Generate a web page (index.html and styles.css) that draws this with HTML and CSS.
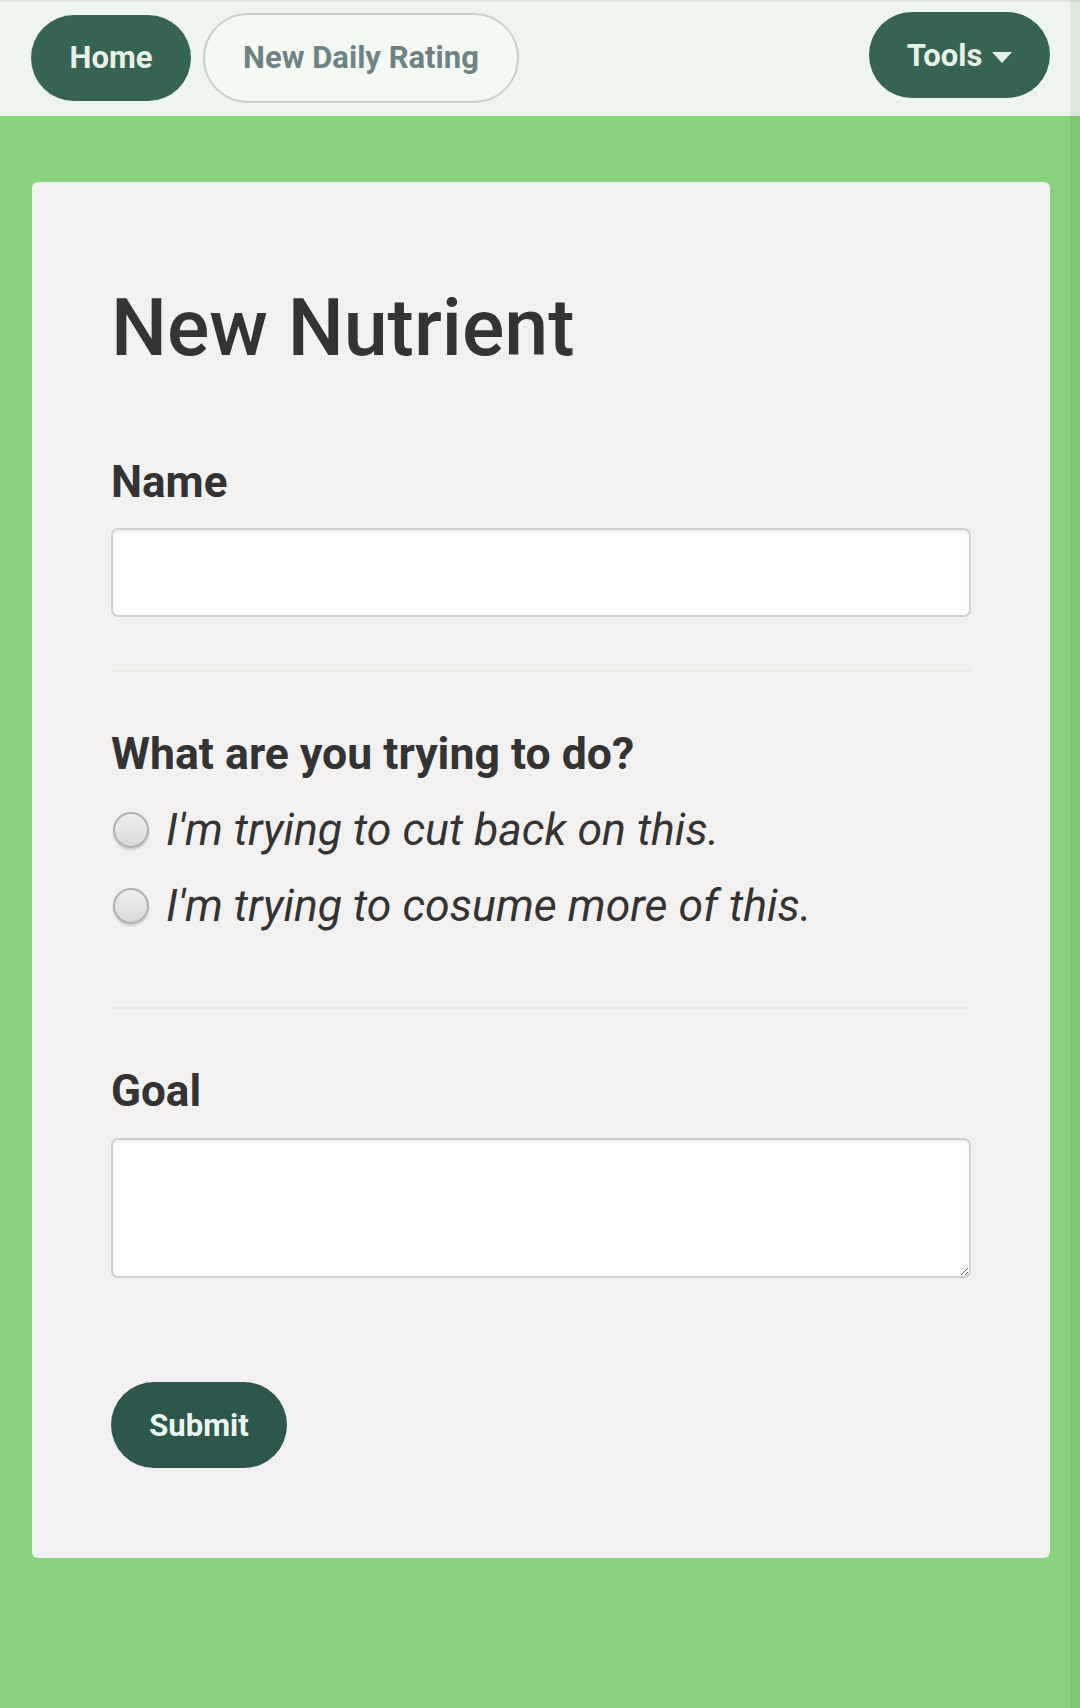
FILE: index.html
```html
<!DOCTYPE html>
<html lang="en">
<head>
<meta charset="utf-8">
<title>New Nutrient</title>
<link rel="stylesheet" href="styles.css">
</head>
<body>
<nav class="nav">
  <a class="pill pill-dark pill-home" href="#">Home</a>
  <a class="pill pill-light" href="#">New Daily Rating</a>
  <a class="pill pill-dark pill-tools" href="#">Tools <span class="caret"></span></a>
</nav>
<main class="card">
  <h1 class="title">New Nutrient</h1>
  <form class="form">
    <label class="label" for="name">Name</label>
    <input class="field" id="name" type="text">
    <hr class="sep sep-first">
    <div class="label label-q">What are you trying to do?</div>
    <label class="option"><input class="radio" type="radio" name="dir"><span>I'm trying to cut back on this.</span></label>
    <label class="option"><input class="radio" type="radio" name="dir"><span>I'm trying to cosume more of this.</span></label>
    <hr class="sep sep-second">
    <label class="label label-goal" for="goal">Goal</label>
    <textarea class="field area" id="goal"></textarea>
    <button class="submit" type="button">Submit</button>
  </form>
</main>
<div class="scrollbar"></div>
</body>
</html>
```

FILE: styles.css
```css
html {
  background: #88d47c;
}
body {
  margin: 0;
  min-height: 1708px;
  background: #88d47c;
  font-family: Roboto, "Liberation Sans", sans-serif;
  color: #333333;
}
.nav {
  display: flex;
  align-items: center;
  height: 116px;
  box-sizing: border-box;
  padding: 0 30px 0 31px;
  background: #edf5ec;
  border-top: 2px solid #dfe5df;
}
.pill {
  display: flex;
  align-items: center;
  justify-content: center;
  box-sizing: border-box;
  height: 86px;
  border-radius: 45px;
  font-size: 31px;
  font-weight: 700;
  text-decoration: none;
}
.pill-dark {
  background: #376352;
  color: #e8f1e8;
}
.pill-home {
  width: 160px;
  margin-bottom: 3px;
}
.pill-light {
  width: 316px;
  height: 90px;
  margin-left: 12px;
  margin-bottom: 3px;
  background: #f4faf3;
  border: 2px solid #c9d0c9;
  color: #6d8282;
}
.pill-tools {
  width: 181px;
  margin-left: auto;
  margin-bottom: 8px;
  gap: 10px;
}
.caret {
  width: 0;
  height: 0;
  border-left: 10px solid transparent;
  border-right: 10px solid transparent;
  border-top: 11px solid #e8f1e8;
  margin-top: 4px;
}
.card {
  display: block;
  margin: 66px 30px 0 32px;
  padding: 98px 79px 90px;
  background: #f2f1ef;
  border-radius: 6px;
}
.title {
  margin: 0;
  font-size: 79px;
  line-height: 96px;
  font-weight: 500;
  color: #333333;
}
.form {
  display: flex;
  flex-direction: column;
}
.label {
  display: block;
  margin-top: 80px;
  font-size: 44px;
  line-height: 52px;
  font-weight: 700;
  color: #333333;
}
.label-q {
  margin-top: 56px;
  font-size: 44.6px;
}
.label-goal {
  margin-top: 56px;
}
.field {
  display: block;
  margin: 20px 0 0;
  width: 100%;
  height: 89px;
  box-sizing: border-box;
  border: 2px solid #cfcfcf;
  border-radius: 7px;
  background: #ffffff;
  box-shadow: inset 0 2px 3px rgba(0, 0, 0, 0.07);
  font: inherit;
}
.area {
  margin-top: 21px;
  height: 140px;
  resize: vertical;
}
.sep {
  margin: 53px 0 0;
  border: 0;
  border-top: 2px solid #eae9e6;
  height: 0;
}
.sep-second {
  margin-top: 63px;
}
.option {
  display: flex;
  align-items: center;
  gap: 17px;
  height: 76px;
  font-size: 44.6px;
  font-style: italic;
  font-weight: 400;
  color: #333333;
}
.label-q + .option {
  margin-top: 12px;
}
.radio {
  appearance: none;
  -webkit-appearance: none;
  margin: 0 0 0 2px;
  width: 36px;
  height: 36px;
  flex: none;
  box-sizing: border-box;
  border: 2px solid #b0b0b0;
  border-radius: 50%;
  background: linear-gradient(#efefef, #d9d9d9);
  box-shadow: 0 2px 2px rgba(0, 0, 0, 0.15);
}
.submit {
  align-self: flex-start;
  margin-top: 104px;
  width: 176px;
  height: 86px;
  border: 0;
  border-radius: 43px;
  background: #2d564c;
  color: #eef4ee;
  font-family: Roboto, "Liberation Sans", sans-serif;
  font-size: 31px;
  font-weight: 700;
}
.scrollbar {
  position: fixed;
  top: 0;
  right: 0;
  bottom: 0;
  width: 10px;
  background: rgba(0, 0, 0, 0.06);
}
```
